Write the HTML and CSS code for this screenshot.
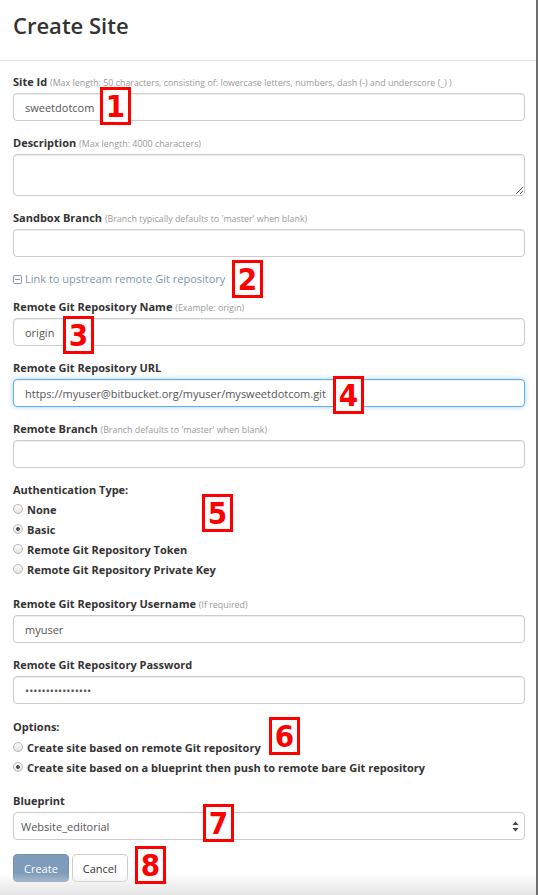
FILE: index.html
```html
<!DOCTYPE html>
<html lang="en">
<head>
<meta charset="utf-8">
<title>Create Site</title>
<link rel="stylesheet" href="styles.css">
</head>
<body>
<div class="modal">
  <div class="modal-header">
    <h1 class="modal-title">Create Site</h1>
  </div>
  <div class="modal-body">
    <form class="site-form">
      <div class="form-group">
        <label class="ctl-label">Site Id <small class="hint">(Max length: 50 characters, consisting of: lowercase letters, numbers, dash (-) and underscore (_) )</small></label>
        <input class="form-control" type="text" value="sweetdotcom">
      </div>
      <div class="form-group">
        <label class="ctl-label">Description <small class="hint">(Max length: 4000 characters)</small></label>
        <textarea class="form-control area"></textarea>
      </div>
      <div class="form-group">
        <label class="ctl-label">Sandbox Branch <small class="hint">(Branch typically defaults to 'master' when blank)</small></label>
        <input class="form-control" type="text" value="">
      </div>
      <div class="toggle-link">
        <svg class="toggle-icon" width="9" height="9" viewBox="0 0 9 9"><rect x="0.5" y="0.5" width="8" height="8" rx="1" fill="none" stroke="currentColor"/><line x1="2" y1="4.5" x2="7" y2="4.5" stroke="currentColor"/></svg>
        <span>Link to upstream remote Git repository</span>
      </div>
      <div class="form-group">
        <label class="ctl-label">Remote Git Repository Name <small class="hint">(Example: origin)</small></label>
        <input class="form-control" type="text" value="origin">
      </div>
      <div class="form-group">
        <label class="ctl-label">Remote Git Repository URL</label>
        <input class="form-control focused" type="text" value="https://myuser@bitbucket.org/myuser/mysweetdotcom.git">
      </div>
      <div class="form-group">
        <label class="ctl-label">Remote Branch <small class="hint">(Branch defaults to 'master' when blank)</small></label>
        <input class="form-control" type="text" value="">
      </div>
      <div class="radio-section auth">
        <div class="ctl-label">Authentication Type:</div>
        <div class="radio-list">
          <label class="radio"><input type="radio" name="auth"><span>None</span></label>
          <label class="radio"><input type="radio" name="auth" checked><span>Basic</span></label>
          <label class="radio"><input type="radio" name="auth"><span>Remote Git Repository Token</span></label>
          <label class="radio"><input type="radio" name="auth"><span>Remote Git Repository Private Key</span></label>
        </div>
      </div>
      <div class="form-group">
        <label class="ctl-label">Remote Git Repository Username <small class="hint">(If required)</small></label>
        <input class="form-control" type="text" value="myuser">
      </div>
      <div class="form-group pw">
        <label class="ctl-label">Remote Git Repository Password</label>
        <input class="form-control" type="password" value="passwordpassword">
      </div>
      <div class="radio-section options">
        <div class="ctl-label">Options:</div>
        <div class="radio-list">
          <label class="radio"><input type="radio" name="opt"><span>Create site based on remote Git repository</span></label>
          <label class="radio"><input type="radio" name="opt" checked><span>Create site based on a blueprint then push to remote bare Git repository</span></label>
        </div>
      </div>
      <div class="form-group">
        <label class="ctl-label">Blueprint</label>
        <div class="select-wrap">
          <select class="form-control select"><option>Website_editorial</option></select>
          <svg class="select-arrows" width="7" height="11" viewBox="0 0 7 11"><path d="M3.5 0.5 L6.5 4 L0.5 4 Z" fill="#444"/><path d="M3.5 10.5 L6.5 7 L0.5 7 Z" fill="#444"/></svg>
        </div>
      </div>
      <div class="actions">
        <button type="button" class="btn btn-primary">Create</button>
        <button type="button" class="btn btn-default">Cancel</button>
      </div>
    </form>
  </div>
  <div class="bottom-fade"></div>
</div>

<div class="badge b1">1</div>
<div class="badge b2">2</div>
<div class="badge b3">3</div>
<div class="badge b4">4</div>
<div class="badge b5">5</div>
<div class="badge b6">6</div>
<div class="badge b7">7</div>
<div class="badge b8">8</div>
</body>
</html>
```

FILE: styles.css
```css
html, body {
  margin: 0;
  padding: 0;
  background: #fff;
  overflow: hidden;
}
body {
  width: 539px;
  height: 895px;
  position: relative;
  font-family: "Open Sans", "Noto Sans", "Liberation Sans", sans-serif;
  color: #333;
}
.modal {
  width: 536px;
  height: 895px;
  border-right: 2px solid #6e6e6e;
  background: #fff;
  position: relative;
  overflow: hidden;
}
.modal-header {
  box-sizing: border-box;
  border-bottom: 1px solid #e5e5e5;
  padding: 10px 13px 0;
  height: 61px;
}
.modal-title {
  margin: 0;
  font-size: 22px;
  line-height: 30px;
  font-weight: 600;
  color: #333;
}
.modal-body {
  padding: 13px 11px 0 13px;
}
.form-group {
  margin-bottom: 14px;
}
.form-group.pw {
  margin-bottom: 15px;
}
.ctl-label {
  display: block;
  height: 16px;
  font-size: 11px;
  font-weight: 700;
  line-height: 16px;
  margin-bottom: 3px;
  color: #333;
  white-space: nowrap;
}
.hint {
  font-size: 8.9px;
  line-height: 1;
  font-weight: 400;
  color: #999;
}
.form-control {
  display: block;
  width: 100%;
  height: 28px;
  box-sizing: border-box;
  padding: 0 11px;
  margin: 0;
  font-family: "Open Sans", "Noto Sans", sans-serif;
  font-size: 11px;
  color: #555;
  background: #fff;
  border: 1px solid #ccc;
  border-radius: 4px;
  box-shadow: inset 0 1px 1px rgba(0,0,0,.075);
  outline: none;
}
.form-control.area {
  height: 42px;
  padding: 5px 11px;
  resize: vertical;
}
.form-control.focused {
  border-color: #66afe9;
  box-shadow: inset 0 1px 1px rgba(0,0,0,.075), 0 0 5px rgba(102,175,233,.6);
}
.toggle-link {
  display: flex;
  align-items: center;
  gap: 3px;
  margin: 1px 0 12px;
  font-size: 11px;
  line-height: 16px;
  height: 16px;
  color: #8296ad;
}
.toggle-icon {
  display: block;
}
.radio-section.auth {
  margin-bottom: 17px;
}
.radio-section.options {
  margin-bottom: 16px;
}
.radio-section .ctl-label {
  margin-bottom: 0;
}
.radio-list {
  margin-top: 1px;
  display: flex;
  flex-direction: column;
}
.options .radio-list {
  margin-top: 2px;
}
.radio {
  display: flex;
  align-items: center;
  height: 20px;
  gap: 4px;
  font-size: 11px;
  font-weight: 700;
  color: #333;
}
.radio input {
  -webkit-appearance: none;
  appearance: none;
  margin: 0;
  width: 10px;
  height: 10px;
  box-sizing: border-box;
  border: 1px solid #b8b8b8;
  border-radius: 50%;
  background: linear-gradient(#fbfbfb, #e4e4e4);
}
.radio input:checked {
  background: radial-gradient(circle, #555 0, #555 1.6px, transparent 2.2px), linear-gradient(#fbfbfb, #e4e4e4);
}
.select-wrap {
  position: relative;
}
.form-control.select {
  -webkit-appearance: none;
  appearance: none;
  padding: 0 7px;
  box-shadow: none;
}
.select-arrows {
  position: absolute;
  right: 6px;
  top: 9px;
  display: block;
}
.actions {
  display: flex;
  gap: 3px;
  margin-top: 13px;
}
.btn {
  height: 28px;
  box-sizing: border-box;
  padding: 0 10px;
  font-family: "Open Sans", "Noto Sans", sans-serif;
  font-size: 11px;
  border-radius: 4px;
  border: 1px solid;
  cursor: pointer;
}
.btn-primary {
  background: #7e9bbb;
  border-color: #7592b3;
  color: #fff;
}
.btn-default {
  background: #fff;
  border-color: #ccc;
  color: #333;
}
.bottom-fade {
  position: absolute;
  left: 0;
  right: 0;
  bottom: 0;
  height: 22px;
  background: linear-gradient(rgba(230,230,230,0), rgba(228,228,228,1));
  pointer-events: none;
}
.badge {
  position: absolute;
  width: 31px;
  height: 38px;
  box-sizing: border-box;
  border: 3px solid #f00;
  background: #fff;
  color: #f00;
  font-family: "DejaVu Sans Condensed", "DejaVu Sans", sans-serif;
  font-stretch: condensed;
  font-weight: 700;
  font-size: 31px;
  line-height: 32px;
  text-align: center;
}
.b1 { left: 100px; top: 87px; }
.b2 { left: 232px; top: 260px; }
.b3 { left: 63px; top: 316px; }
.b4 { left: 333px; top: 376px; }
.b5 { left: 202px; top: 494px; }
.b6 { left: 269px; top: 717px; }
.b7 { left: 203px; top: 804px; }
.b8 { left: 135px; top: 846px; }
```
